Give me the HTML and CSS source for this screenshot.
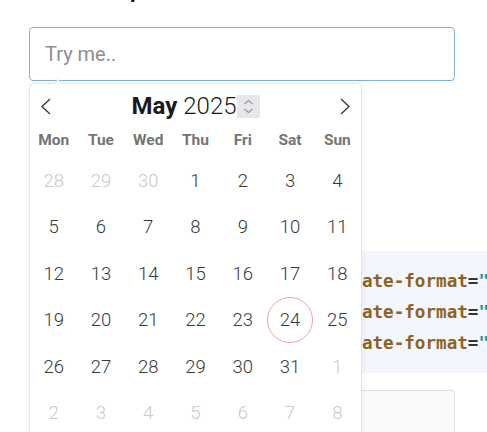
FILE: index.html
```html
<!DOCTYPE html>
<html lang="en">
<head>
    <meta charset="UTF-8">
    <meta name="viewport" content="width=device-width, initial-scale=1.0">
    <title>Custom Input Formats</title>
    <link rel="stylesheet" href="styles.css">
</head>
<body>
    <div class="page">
        <h2 class="title">Custom Input Formats</h2>
        <input type="text" class="date-input" placeholder="Try me..">

        <pre class="code"><code><span class="tag">&lt;input</span> <span class="attr">class</span>=<span class="str">"flatpickr"</span> <span class="attr">data-date-format</span>=<span class="str">"Y-m-d"</span><span class="tag">&gt;</span>
<span class="tag">&lt;input</span> <span class="attr">class</span>=<span class="str">"flatpickr"</span> <span class="attr">data-date-format</span>=<span class="str">"d.m.Y"</span><span class="tag">&gt;</span>
<span class="tag">&lt;input</span> <span class="attr">class</span>=<span class="str">"flatpickr"</span> <span class="attr">data-date-format</span>=<span class="str">"F j, Y"</span><span class="tag">&gt;</span></code></pre>

        <div class="result-box"></div>
    </div>

    <div class="calendar">
        <div class="cal-header">
            <span class="nav prev">
                <svg width="11" height="17" viewBox="0 0 11 17"><path d="M10 1 L2 8.5 L10 16" fill="none" stroke="#3c3c3c" stroke-width="1.4"/></svg>
            </span>
            <div class="cal-title">
                <span class="cal-month">May</span>
                <span class="cal-year">2025</span><span class="spinner">
                    <svg width="23" height="23" viewBox="0 0 23 23"><path d="M7.5 9 L11.5 5.5 L15.5 9 M7.5 14 L11.5 17.5 L15.5 14" fill="none" stroke="#9a9a9a" stroke-width="1.3"/></svg>
                </span>
            </div>
            <span class="nav next">
                <svg width="11" height="17" viewBox="0 0 11 17"><path d="M1 1 L9 8.5 L1 16" fill="none" stroke="#3c3c3c" stroke-width="1.4"/></svg>
            </span>
        </div>
        <div class="weekdays">
            <span>Mon</span><span>Tue</span><span>Wed</span><span>Thu</span><span>Fri</span><span>Sat</span><span>Sun</span>
        </div>
        <div class="days">
            <span class="day other">28</span><span class="day other">29</span><span class="day other">30</span><span class="day">1</span><span class="day">2</span><span class="day">3</span><span class="day">4</span>
            <span class="day">5</span><span class="day">6</span><span class="day">7</span><span class="day">8</span><span class="day">9</span><span class="day">10</span><span class="day">11</span>
            <span class="day">12</span><span class="day">13</span><span class="day">14</span><span class="day">15</span><span class="day">16</span><span class="day">17</span><span class="day">18</span>
            <span class="day">19</span><span class="day">20</span><span class="day">21</span><span class="day">22</span><span class="day">23</span><span class="day today">24</span><span class="day">25</span>
            <span class="day">26</span><span class="day">27</span><span class="day">28</span><span class="day">29</span><span class="day">30</span><span class="day">31</span><span class="day other">1</span>
            <span class="day other">2</span><span class="day other">3</span><span class="day other">4</span><span class="day other">5</span><span class="day other">6</span><span class="day other">7</span><span class="day other">8</span>
        </div>
    </div>
</body>
</html>
```

FILE: styles.css
```css
html, body {
    overflow: hidden;
}
body {
    font-family: Roboto, "Liberation Sans", sans-serif;
    margin: 0;
    color: #222;
}
.page {
    padding-left: 29px;
    width: 426px;
}
.title {
    font-size: 22px;
    line-height: 26px;
    font-weight: bold;
    margin: -23px 0 24px;
    color: #111;
}
.date-input {
    display: block;
    box-sizing: border-box;
    width: 426px;
    height: 54px;
    margin: 0;
    padding: 0 15px;
    border: 1px solid #7fb1d9;
    border-radius: 4px;
    font-family: Roboto, sans-serif;
    font-size: 20px;
    outline: none;
}
.date-input::placeholder {
    color: #8e8e8e;
}
.code {
    margin: 170px -80px 0 0;
    padding: 14.5px 0 14.5px 4.5px;
    background: #f3f6fc;
    font-family: "DejaVu Sans Mono", monospace;
    font-size: 17.6px;
    font-weight: bold;
    line-height: 31px;
    color: #333;
    white-space: pre;
    overflow: hidden;
}
.tag {
    color: #2f6f9f;
}
.attr {
    color: #8e6322;
}
.str {
    color: #2b9a8c;
}
.result-box {
    margin-top: 17px;
    height: 80px;
    border: 1px solid #dedede;
    border-radius: 4px;
    background: #fafafa;
}

/* calendar popup */
.calendar {
    position: absolute;
    top: 83px;
    left: 29px;
    width: 333px;
    box-sizing: border-box;
    border: 1px solid #e4e4e4;
    border-radius: 5px;
    background: #fff;
    box-shadow: 0 2px 6px rgba(0, 0, 0, 0.06);
}
.calendar::before,
.calendar::after {
    content: "";
    position: absolute;
    left: 23px;
    border: solid transparent;
}
.calendar::before {
    bottom: 100%;
    border-width: 5px;
    border-bottom-color: #dcdcdc;
}
.calendar::after {
    left: 24px;
    bottom: 100%;
    border-width: 4px;
    border-bottom-color: #fff;
}
.cal-header {
    display: flex;
    align-items: center;
    justify-content: space-between;
    height: 44px;
    padding: 0 10px;
}
.nav {
    display: flex;
    width: 11px;
}
.cal-title {
    display: flex;
    align-items: center;
    font-size: 24px;
    color: #1a1a1a;
}
.cal-month {
    font-weight: bold;
    margin-right: 6px;
}
.cal-year {
    font-weight: 300;
}
.spinner {
    display: flex;
    width: 23px;
    height: 23px;
    background: #e7e7eb;
}
.weekdays {
    display: grid;
    grid-template-columns: repeat(7, 1fr);
    height: 24px;
    line-height: 25px;
    text-align: center;
    font-size: 15.5px;
    font-weight: bold;
    color: #757575;
}
.days {
    display: grid;
    grid-template-columns: repeat(7, 1fr);
    grid-auto-rows: 46.4px;
    margin-top: 6px;
}
.day {
    display: flex;
    align-items: center;
    justify-content: center;
    width: 46px;
    height: 46px;
    margin: 0 auto;
    box-sizing: border-box;
    border-radius: 50%;
    font-size: 18.5px;
    font-weight: 300;
    color: #393939;
}
.day.other {
    color: #c9c9c9;
}
.day.today {
    border: 1px solid #efa0a8;
}
```
